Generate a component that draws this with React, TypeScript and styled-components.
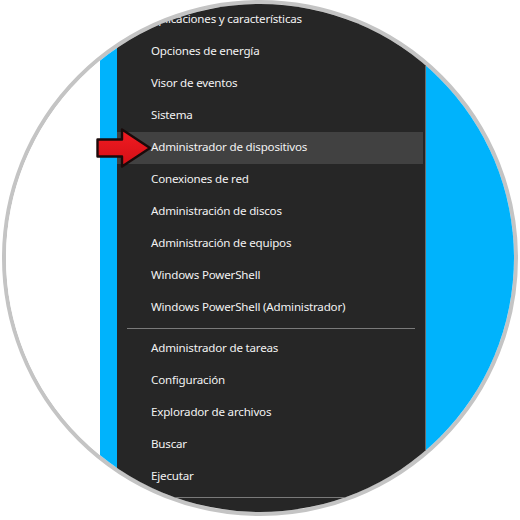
import * as React from 'react'
import styled, { createGlobalStyle } from 'styled-components'

const GlobalStyle = createGlobalStyle`
  html, body {
    margin: 0;
    padding: 0;
    background: #ffffff;
  }
  body {
    font-family: "Noto Sans", "Open Sans", sans-serif;
  }
`

const Page = styled.div`
  position: relative;
  width: 520px;
  height: 520px;
  background: #ffffff;
  overflow: hidden;
`

// recorte circular de la captura
const Lens = styled.div`
  display: flex;
  width: 516px;
  height: 516px;
  margin-left: 2px;
  box-sizing: border-box;
  border: 4px solid #c4c4c4;
  border-radius: 50%;
  overflow: hidden;
  background: #ffffff;
`

const Blank = styled.div`
  width: 94px;
  flex: none;
  background: #ffffff;
`

const Desktop = styled.div<{ $grow?: boolean }>`
  flex: ${(p) => (p.$grow ? '1' : 'none')};
  width: ${(p) => (p.$grow ? 'auto' : '17px')};
  background: #00b3fc;
`

const Menu = styled.div`
  flex: none;
  width: 308px;
  display: flex;
  flex-direction: column;
  background: #262626;
  border-right: 1px solid #6b6b6b;
`

const List = styled.div`
  display: flex;
  flex-direction: column;
  margin-top: 0;
`

const Item = styled.div<{ $active?: boolean }>`
  height: 32px;
  padding: 0 0 3px 34px;
  margin-right: 2px;
  box-sizing: border-box;
  display: flex;
  align-items: center;
  font-size: 11.6px;
  letter-spacing: -0.2px;
  color: #f2f2f2;
  white-space: nowrap;
  background: ${(p) => (p.$active ? '#414141' : 'transparent')};
`

const Separator = styled.div`
  height: 1px;
  margin: 4px 10px;
  background: #7a7a7a;
`

const Pointer = styled.svg`
  position: absolute;
  left: 95px;
  top: 127px;
`

const topGroup = [
  'Aplicaciones y características',
  'Opciones de energía',
  'Visor de eventos',
  'Sistema',
  'Administrador de dispositivos',
  'Conexiones de red',
  'Administración de discos',
  'Administración de equipos',
  'Windows PowerShell',
  'Windows PowerShell (Administrador)',
]

const midGroup = [
  'Administrador de tareas',
  'Configuración',
  'Explorador de archivos',
  'Buscar',
  'Ejecutar',
]

const App: React.FC = () => {
  return (
    <>
      <GlobalStyle />
      <Page>
        <Lens>
          <Blank />
          <Desktop />
          <Menu>
            <List>
              {topGroup.map((label) => (
                <Item key={label} $active={label === 'Administrador de dispositivos'}>
                  {label}
                </Item>
              ))}
              <Separator />
              {midGroup.map((label) => (
                <Item key={label}>{label}</Item>
              ))}
              <Separator />
            </List>
          </Menu>
          <Desktop $grow />
        </Lens>
        {/* flecha roja que señala la opción */}
        <Pointer width="60" height="44" viewBox="0 0 60 44">
          <defs>
            <linearGradient id="red" x1="0" y1="0" x2="0" y2="1">
              <stop offset="0" stopColor="#f21c22" />
              <stop offset="1" stopColor="#d30f16" />
            </linearGradient>
          </defs>
          <path
            d="M2.5 12.5 H27 V2.5 L55 21 L27 39.5 V29.5 H2.5 Z"
            fill="url(#red)"
            stroke="#1a0a0a"
            strokeWidth="2.4"
            strokeLinejoin="round"
          />
        </Pointer>
      </Page>
    </>
  )
}

export default App
